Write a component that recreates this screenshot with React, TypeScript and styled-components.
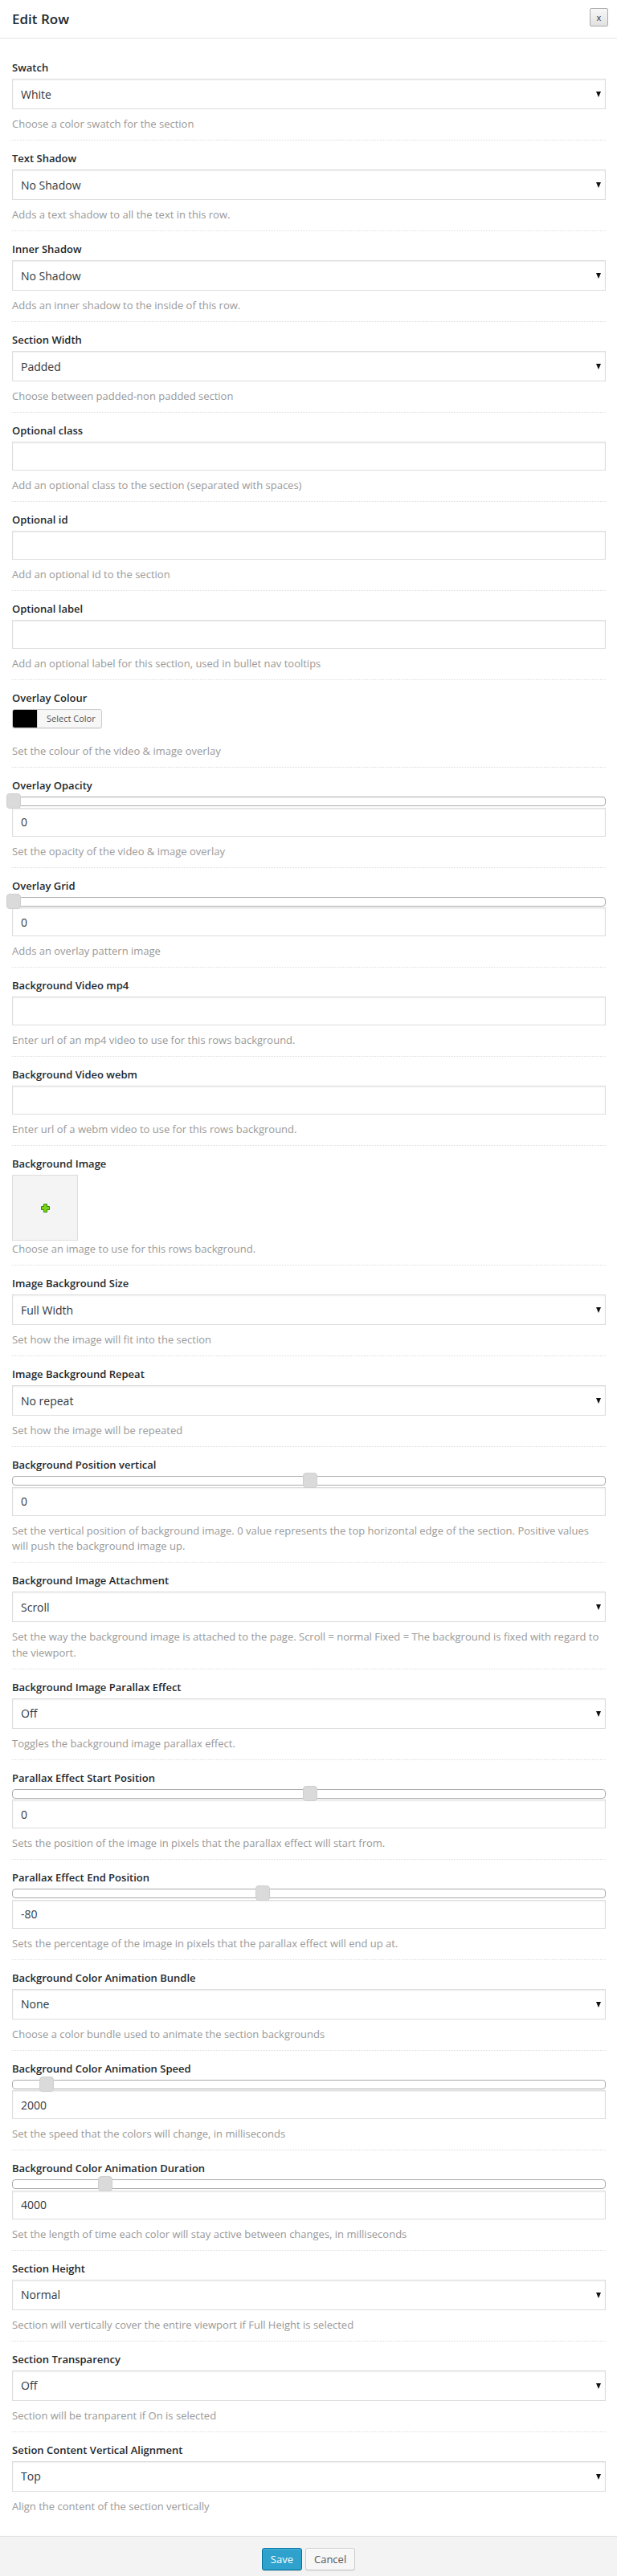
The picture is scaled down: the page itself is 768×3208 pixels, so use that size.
import React from 'react';
import styled, { createGlobalStyle } from 'styled-components';

const GlobalStyle = createGlobalStyle`
  html, body {
    margin: 0;
    padding: 0;
    background: #fff;
  }
  body {
    font-family: 'Open Sans', 'Liberation Sans', sans-serif;
    color: #23282d;
  }
  * {
    box-sizing: border-box;
  }
`;

const Modal = styled.div`
  display: flex;
  flex-direction: column;
  width: 768px;
  background: #fff;
`;

const Header = styled.div`
  display: flex;
  justify-content: space-between;
  align-items: flex-start;
  height: 48px;
  padding: 0 11px 0 15px;
  border-bottom: 1px solid #e5e5e5;
`;

const Title = styled.h1`
  margin: 0;
  font-size: 17px;
  line-height: 47px;
  font-weight: 600;
  color: #23282d;
`;

const CloseButton = styled.button`
  margin-top: 10px;
  width: 23px;
  height: 23px;
  padding: 0;
  border: 1px solid #aaa;
  border-radius: 2px;
  background: linear-gradient(#f8f8f8, #e1e1e1);
  font-family: 'Open Sans', sans-serif;
  font-size: 11px;
  line-height: 20px;
  color: #333;
`;

const Body = styled.div`
  padding: 14px 14px 17px 15px;
`;

const Field = styled.div`
  padding: 12px 0 9.5px;
  border-bottom: 1px dotted #dcdcdc;

  &:last-child {
    border-bottom: none;
  }
`;

const Label = styled.label`
  display: block;
  margin-bottom: 4px;
  font-size: 13px;
  line-height: 20px;
  font-weight: 600;
  color: #23282d;
`;

const Description = styled.p<{ $gap?: number }>`
  margin: ${p => p.$gap ?? 9}px 0 0;
  font-size: 13px;
  line-height: 19.5px;
  color: #999;
`;

const SelectWrap = styled.div`
  position: relative;

  &::after {
    content: '';
    position: absolute;
    right: 6px;
    top: 16px;
    border-left: 3.5px solid transparent;
    border-right: 3.5px solid transparent;
    border-top: 7px solid #111;
  }
`;

const Select = styled.select`
  display: block;
  width: 100%;
  height: 38px;
  padding: 0 24px 0 10px;
  border: 1px solid #ddd;
  border-radius: 0;
  box-shadow: inset 0 1px 2px rgba(0, 0, 0, 0.07);
  background: #fff;
  appearance: none;
  font-family: 'Open Sans', sans-serif;
  font-size: 14px;
  color: #32373c;
`;

const TextInput = styled.input`
  display: block;
  width: 100%;
  height: 36px;
  padding: 0 10px;
  border: 1px solid #ddd;
  border-radius: 0;
  box-shadow: inset 0 1px 2px rgba(0, 0, 0, 0.07);
  background: #fff;
  font-family: 'Open Sans', sans-serif;
  font-size: 14px;
  color: #32373c;
`;

const Track = styled.div`
  position: relative;
  height: 12px;
  margin-bottom: 1.5px;
  border: 1px solid #aaa;
  border-radius: 4px;
  background: #fff;
`;

const Handle = styled.span`
  position: absolute;
  top: -5px;
  width: 18px;
  height: 19px;
  margin-left: -8px;
  border: 1px solid #cfcfcf;
  border-radius: 4px;
  background: #dadada;
`;

const ColorButton = styled.div`
  display: inline-flex;
  align-items: stretch;
  height: 24px;
  border: 1px solid #ccc;
  border-radius: 3px;
  background: #f7f7f7;
  box-shadow: 0 1px 0 rgba(0, 0, 0, 0.08);
  overflow: hidden;
`;

const ColorSwatch = styled.span<{ $color: string }>`
  width: 30px;
  background: ${p => p.$color};
`;

const ColorText = styled.span`
  padding: 0 7px 0 11px;
  border-left: 1px solid #ddd;
  font-size: 11px;
  line-height: 22px;
  color: #555;
`;

const ImageBox = styled.div`
  display: flex;
  align-items: center;
  justify-content: center;
  width: 82px;
  height: 82px;
  border: 1px solid #ddd;
  background: #f4f4f4;
`;

const Footer = styled.div`
  display: flex;
  justify-content: center;
  gap: 4px;
  padding: 14px 0 12px;
  border-top: 1px solid #ddd;
  background: #f3f3f3;
`;

const Button = styled.button<{ $primary?: boolean }>`
  height: 28px;
  padding: 0 10px;
  border: 1px solid ${p => (p.$primary ? '#0074a2' : '#ccc')};
  border-radius: 3px;
  background: ${p => (p.$primary ? '#2ea2cc' : '#f7f7f7')};
  box-shadow: ${p =>
    p.$primary
      ? 'inset 0 1px 0 rgba(120, 200, 230, 0.5), 0 1px 0 rgba(0, 0, 0, 0.15)'
      : 'inset 0 1px 0 #fff, 0 1px 0 rgba(0, 0, 0, 0.08)'};
  font-family: 'Open Sans', sans-serif;
  font-size: 13px;
  line-height: 26px;
  color: ${p => (p.$primary ? '#fff' : '#555')};
`;

type FieldDef =
  | { kind: 'select'; label: string; value: string; desc: string }
  | { kind: 'text'; label: string; desc: string }
  | { kind: 'slider'; label: string; value: string; pos: number; desc: string }
  | { kind: 'color'; label: string; color: string; desc: string }
  | { kind: 'image'; label: string; desc: string };

const fields: FieldDef[] = [
  { kind: 'select', label: 'Swatch', value: 'White', desc: 'Choose a color swatch for the section' },
  { kind: 'select', label: 'Text Shadow', value: 'No Shadow', desc: 'Adds a text shadow to all the text in this row.' },
  { kind: 'select', label: 'Inner Shadow', value: 'No Shadow', desc: 'Adds an inner shadow to the inside of this row.' },
  { kind: 'select', label: 'Section Width', value: 'Padded', desc: 'Choose between padded-non padded section' },
  { kind: 'text', label: 'Optional class', desc: 'Add an optional class to the section (separated with spaces)' },
  { kind: 'text', label: 'Optional id', desc: 'Add an optional id to the section' },
  { kind: 'text', label: 'Optional label', desc: 'Add an optional label for this section, used in bullet nav tooltips' },
  { kind: 'color', label: 'Overlay Colour', color: '#000', desc: 'Set the colour of the video & image overlay' },
  { kind: 'slider', label: 'Overlay Opacity', value: '0', pos: 0, desc: 'Set the opacity of the video & image overlay' },
  { kind: 'slider', label: 'Overlay Grid', value: '0', pos: 0, desc: 'Adds an overlay pattern image' },
  { kind: 'text', label: 'Background Video mp4', desc: 'Enter url of an mp4 video to use for this rows background.' },
  { kind: 'text', label: 'Background Video webm', desc: 'Enter url of a webm video to use for this rows background.' },
  { kind: 'image', label: 'Background Image', desc: 'Choose an image to use for this rows background.' },
  { kind: 'select', label: 'Image Background Size', value: 'Full Width', desc: 'Set how the image will fit into the section' },
  { kind: 'select', label: 'Image Background Repeat', value: 'No repeat', desc: 'Set how the image will be repeated' },
  {
    kind: 'slider',
    label: 'Background Position vertical',
    value: '0',
    pos: 50,
    desc: 'Set the vertical position of background image. 0 value represents the top horizontal edge of the section. Positive values will push the background image up.',
  },
  {
    kind: 'select',
    label: 'Background Image Attachment',
    value: 'Scroll',
    desc: 'Set the way the background image is attached to the page. Scroll = normal Fixed = The background is fixed with regard to the viewport.',
  },
  { kind: 'select', label: 'Background Image Parallax Effect', value: 'Off', desc: 'Toggles the background image parallax effect.' },
  {
    kind: 'slider',
    label: 'Parallax Effect Start Position',
    value: '0',
    pos: 50,
    desc: 'Sets the position of the image in pixels that the parallax effect will start from.',
  },
  {
    kind: 'slider',
    label: 'Parallax Effect End Position',
    value: '-80',
    pos: 42,
    desc: 'Sets the percentage of the image in pixels that the parallax effect will end up at.',
  },
  { kind: 'select', label: 'Background Color Animation Bundle', value: 'None', desc: 'Choose a color bundle used to animate the section backgrounds' },
  {
    kind: 'slider',
    label: 'Background Color Animation Speed',
    value: '2000',
    pos: 5.5,
    desc: 'Set the speed that the colors will change, in milliseconds',
  },
  {
    kind: 'slider',
    label: 'Background Color Animation Duration',
    value: '4000',
    pos: 15.5,
    desc: 'Set the length of time each color will stay active between changes, in milliseconds',
  },
  { kind: 'select', label: 'Section Height', value: 'Normal', desc: 'Section will vertically cover the entire viewport if Full Height is selected' },
  { kind: 'select', label: 'Section Transparency', value: 'Off', desc: 'Section will be tranparent if On is selected' },
  { kind: 'select', label: 'Setion Content Vertical Alignment', value: 'Top', desc: 'Align the content of the section vertically' },
];

const PlusIcon = () => (
  <svg width="11" height="11" viewBox="0 0 11 11">
    <path
      d="M3.5 0.5h4v3h3v4h-3v3h-4v-3h-3v-4h3z"
      fill="#7bd31c"
      stroke="#2f8a08"
      strokeWidth="1"
    />
  </svg>
);

const FieldControl = ({ field }: { field: FieldDef }) => {
  switch (field.kind) {
    case 'select':
      return (
        <SelectWrap>
          <Select defaultValue={field.value}>
            <option>{field.value}</option>
          </Select>
        </SelectWrap>
      );
    case 'text':
      return <TextInput type="text" defaultValue="" />;
    case 'slider':
      return (
        <>
          <Track>
            <Handle style={{ left: `${field.pos}%` }} />
          </Track>
          <TextInput type="text" defaultValue={field.value} />
        </>
      );
    case 'color':
      return (
        <ColorButton>
          <ColorSwatch $color={field.color} />
          <ColorText>Select Color</ColorText>
        </ColorButton>
      );
    case 'image':
      return (
        <ImageBox>
          <PlusIcon />
        </ImageBox>
      );
  }
};

const descGap = (field: FieldDef) => {
  if (field.kind === 'color') return 15;
  if (field.kind === 'image') return 1;
  return 9;
};

const App = () => {
  return (
    <>
      <GlobalStyle />
      <Modal>
        <Header>
          <Title>Edit Row</Title>
          <CloseButton>x</CloseButton>
        </Header>
        <Body>
          {fields.map(field => (
            <Field key={field.label}>
              <Label>{field.label}</Label>
              <FieldControl field={field} />
              <Description $gap={descGap(field)}>{field.desc}</Description>
            </Field>
          ))}
        </Body>
        <Footer>
          <Button $primary>Save</Button>
          <Button>Cancel</Button>
        </Footer>
      </Modal>
    </>
  );
};

export default App;
